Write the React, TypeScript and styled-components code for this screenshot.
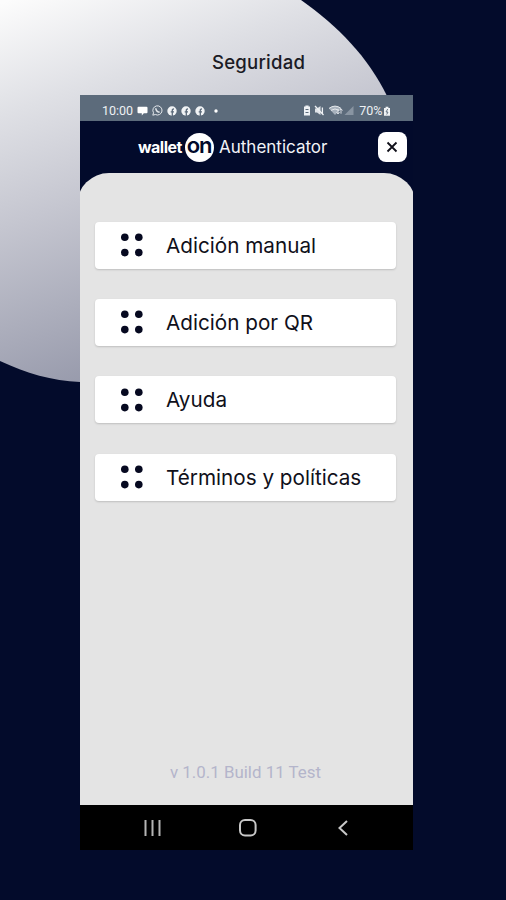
import React from "react";
import styled, { createGlobalStyle } from "styled-components";

const GlobalStyle = createGlobalStyle`
  *, *::before, *::after { box-sizing: border-box; }
  body { margin: 0; background: #030b2b; }
`;

const Poster = styled.main`
  position: relative;
  width: 506px;
  height: 900px;
  overflow: hidden;
  background: #030b2b;
  font-family: Inter, sans-serif;
  display: flex;
  flex-direction: column;
`;

const Backdrop = styled.svg`
  position: absolute;
  left: 0;
  top: 0;
`;

const Title = styled.h1`
  position: relative;
  margin: 0;
  height: 95px;
  padding: 50px 0 0 212px;
  font-size: 18.6px;
  line-height: 25px;
  font-weight: 500;
  letter-spacing: 0.2px;
  color: #1b1b25;
`;

const Phone = styled.section`
  position: relative;
  margin-left: 80px;
  width: 332.5px;
  height: 755px;
  overflow: hidden;
  background: #020a2b;
  display: flex;
  flex-direction: column;
`;

const StatusBar = styled.div`
  height: 26px;
  flex: none;
  padding: 5px 22px 0 22px;
  background: #5c6b7b;
  color: #eef1f4;
  display: flex;
  justify-content: space-between;
  align-items: center;
  font: 400 12.5px Roboto, sans-serif;
`;

const StatusGroup = styled.div<{ $gap: number }>`
  display: flex;
  align-items: center;
  gap: ${(p) => p.$gap}px;
`;

const Header = styled.header`
  height: 52px;
  flex: none;
  padding: 0 6px 0 58px;
  display: flex;
  align-items: center;
  color: #fff;
`;

const Wordmark = styled.span`
  width: 45px;
  font-size: 16px;
  font-weight: 700;
  letter-spacing: -0.5px;
`;

const Badge = styled.span`
  width: 29px;
  height: 29px;
  margin: 0 5px 0 2px;
  border-radius: 50%;
  background: #fff;
  color: #020a2b;
  display: flex;
  align-items: center;
  justify-content: center;
  font-size: 22px;
  line-height: 24px;
  font-weight: 600;
  letter-spacing: -1.2px;
  padding: 0 1px 4px 0;
`;

const Product = styled.span`
  font-size: 17px;
  color: #f1f2f7;
`;

const CloseButton = styled.button`
  margin-left: auto;
  width: 29px;
  height: 30px;
  padding: 0;
  border: 0;
  border-radius: 8px;
  background: #fff;
  display: flex;
  align-items: center;
  justify-content: center;
`;

const Sheet = styled.div`
  flex: 1;
  margin: 0 -3px;
  padding: 48.5px 19.5px 23px 18px;
  border-radius: 32px 32px 0 0;
  background: #e4e4e4;
  display: flex;
  flex-direction: column;
`;

const Menu = styled.nav`
  display: flex;
  flex-direction: column;
  gap: 30.4px;
`;

const MenuItem = styled.button`
  height: 47px;
  padding: 0 0 0 25px;
  border: 0;
  border-radius: 4px;
  background: #fff;
  box-shadow: 0 1px 2px rgba(0, 0, 0, 0.17);
  display: flex;
  align-items: center;
  gap: 22px;
  font: 400 20.7px Inter, sans-serif;
  color: #10101a;
`;

const Version = styled.p`
  margin: auto 0 0;
  text-align: center;
  font: 400 16.9px/20px Roboto, sans-serif;
  color: #b4b5cb;
`;

const NavBar = styled.footer`
  height: 45px;
  flex: none;
  background: #000;
  padding: 0 63px 0 63px;
  display: flex;
  justify-content: space-between;
  align-items: center;
`;

const Facebook = () => (
  <svg width="10" height="10" viewBox="0 0 10 10">
    <circle cx="5" cy="5" r="4.7" fill="#f1f3f5" />
    <path d="M5.3 10V5.4M3.7 5.8H7M5.3 6V4.2Q5.3 2.9 7 3" fill="none" stroke="#5c6b7b" strokeWidth="1.3" />
  </svg>
);

const Dots = () => (
  <svg width="24" height="24" viewBox="0 0 24 24" fill="#060920">
    <circle cx="4.8" cy="4.2" r="3.8" />
    <circle cx="18.8" cy="4.2" r="3.8" />
    <circle cx="4.8" cy="19.6" r="3.8" />
    <circle cx="18.8" cy="19.6" r="3.8" />
  </svg>
);

const items = ["Adición manual", "Adición por QR", "Ayuda", "Términos y políticas"];

export default function App() {
  return (
    <Poster>
      <GlobalStyle />
      <Backdrop width="506" height="400" viewBox="0 0 506 400">
        <defs>
          <linearGradient id="disc" gradientUnits="userSpaceOnUse" x1="10" y1="0" x2="150" y2="400">
            <stop offset="0" stopColor="#fcfcfc" />
            <stop offset="0.25" stopColor="#dfe0e5" />
            <stop offset="0.5" stopColor="#c5c6d0" />
            <stop offset="1" stopColor="#8e91a4" />
          </linearGradient>
        </defs>
        <path d="M0 0H301C338 26 368 57 387 96V382H80C52 381 26 373 0 361Z" fill="url(#disc)" />
      </Backdrop>
      <Title>Seguridad</Title>
      <Phone>
        <StatusBar>
          <StatusGroup $gap={4}>
            <span>10:00</span>
            <svg width="11" height="10" viewBox="0 0 11 10">
              <path d="M1.5 0.7h8q1 0 1 1v4.6q0 1-1 1H6.8L4.8 9.5V7.3H1.5q-1 0-1-1V1.7q0-1 1-1Z" fill="#fff" />
            </svg>
            <svg width="11" height="11" viewBox="0 0 11 11" fill="none" stroke="#e4e8ec">
              <path d="M0.8 10.2L1.5 7.8A4.6 4.6 0 1 1 3.3 9.5Z" />
              <path d="M3.8 3.2Q4 6.5 7.6 7.3" strokeWidth="1.5" />
            </svg>
            <Facebook />
            <Facebook />
            <Facebook />
            <svg width="14" height="10" viewBox="0 0 14 10"><circle cx="7" cy="5" r="1.7" fill="#fff" /></svg>
          </StatusGroup>
          <StatusGroup $gap={3.5}>
            <svg width="8" height="11" viewBox="0 0 8 11">
              <path d="M2.4 0.5h3.2v1H7V10.5H1V1.5H2.4Z" fill="#eef1f4" />
              <path d="M2.5 4.5H5.5M2.5 7.5H5.5" stroke="#5c6b7b" />
            </svg>
            <svg width="11" height="11" viewBox="0 0 11 11">
              <path d="M1 3.5H3L6.5 1V10L3 7.5H1Z" fill="#dfe3e8" />
              <path d="M1 1L9.5 10M8.4 2.5V8.5" stroke="#eef1f4" fill="none" strokeWidth="1.3" />
            </svg>
            <svg width="27" height="11" viewBox="1 0 27 11">
              <path d="M1 3.4Q7 -1.2 13 3.4L7 10Z" fill="#a7b1bc" />
              <path d="M1 3.4Q7 -1.2 13 3.4M3 5.4Q7 2.5 11 5.4" fill="none" stroke="#e4e8ec" />
              <path d="M10 4v4.6M8.5 7l1.5 2 1.5-2M13 8.7V4M11.6 5.5L13 3.8l1.5 1.7" fill="none" stroke="#e4e8ec" strokeWidth="0.9" />
              <path d="M25.5 1V10H16.5Z" fill="#8995a2" />
            </svg>
            <StatusGroup $gap={0}>
              <span>70%</span>
              <svg width="8" height="10" viewBox="0 0 8 10">
                <path d="M2.6 0.8H5.4V2H7V9.7H1V2H2.6Z" fill="#eef1f4" />
                <path d="M4.7 3L3 6H5L3.7 8.5" fill="none" stroke="#5c6b7b" strokeWidth="0.9" />
              </svg>
            </StatusGroup>
          </StatusGroup>
        </StatusBar>
        <Header>
          <Wordmark>wallet</Wordmark>
          <Badge>on</Badge>
          <Product>Authenticator</Product>
          <CloseButton aria-label="Cerrar">
            <svg width="12" height="12" viewBox="0 0 12 12">
              <path d="M1.5 1.5L10.5 10.5M10.5 1.5L1.5 10.5" stroke="#10101a" strokeWidth="1.8" />
            </svg>
          </CloseButton>
        </Header>
        <Sheet>
          <Menu>
            {items.map((label) => (
              <MenuItem key={label}>
                <Dots />
                {label}
              </MenuItem>
            ))}
          </Menu>
          <Version>v 1.0.1 Build 11 Test</Version>
        </Sheet>
        <NavBar>
          <svg width="20" height="18" viewBox="0 0 20 18">
            <path d="M2.5 1V17M9.5 1V17M16.5 1V17" stroke="#b5b5b5" strokeWidth="2" />
          </svg>
          <svg width="20" height="20" viewBox="0 0 20 20">
            <rect x="1" y="2" width="15.6" height="15.6" rx="5" fill="none" stroke="#c8c8c8" strokeWidth="2" />
          </svg>
          <svg width="14" height="18" viewBox="0 0 14 18">
            <path d="M11 2L3.5 9L11 16" fill="none" stroke="#c8c8c8" strokeWidth="2" />
          </svg>
        </NavBar>
      </Phone>
    </Poster>
  );
}
